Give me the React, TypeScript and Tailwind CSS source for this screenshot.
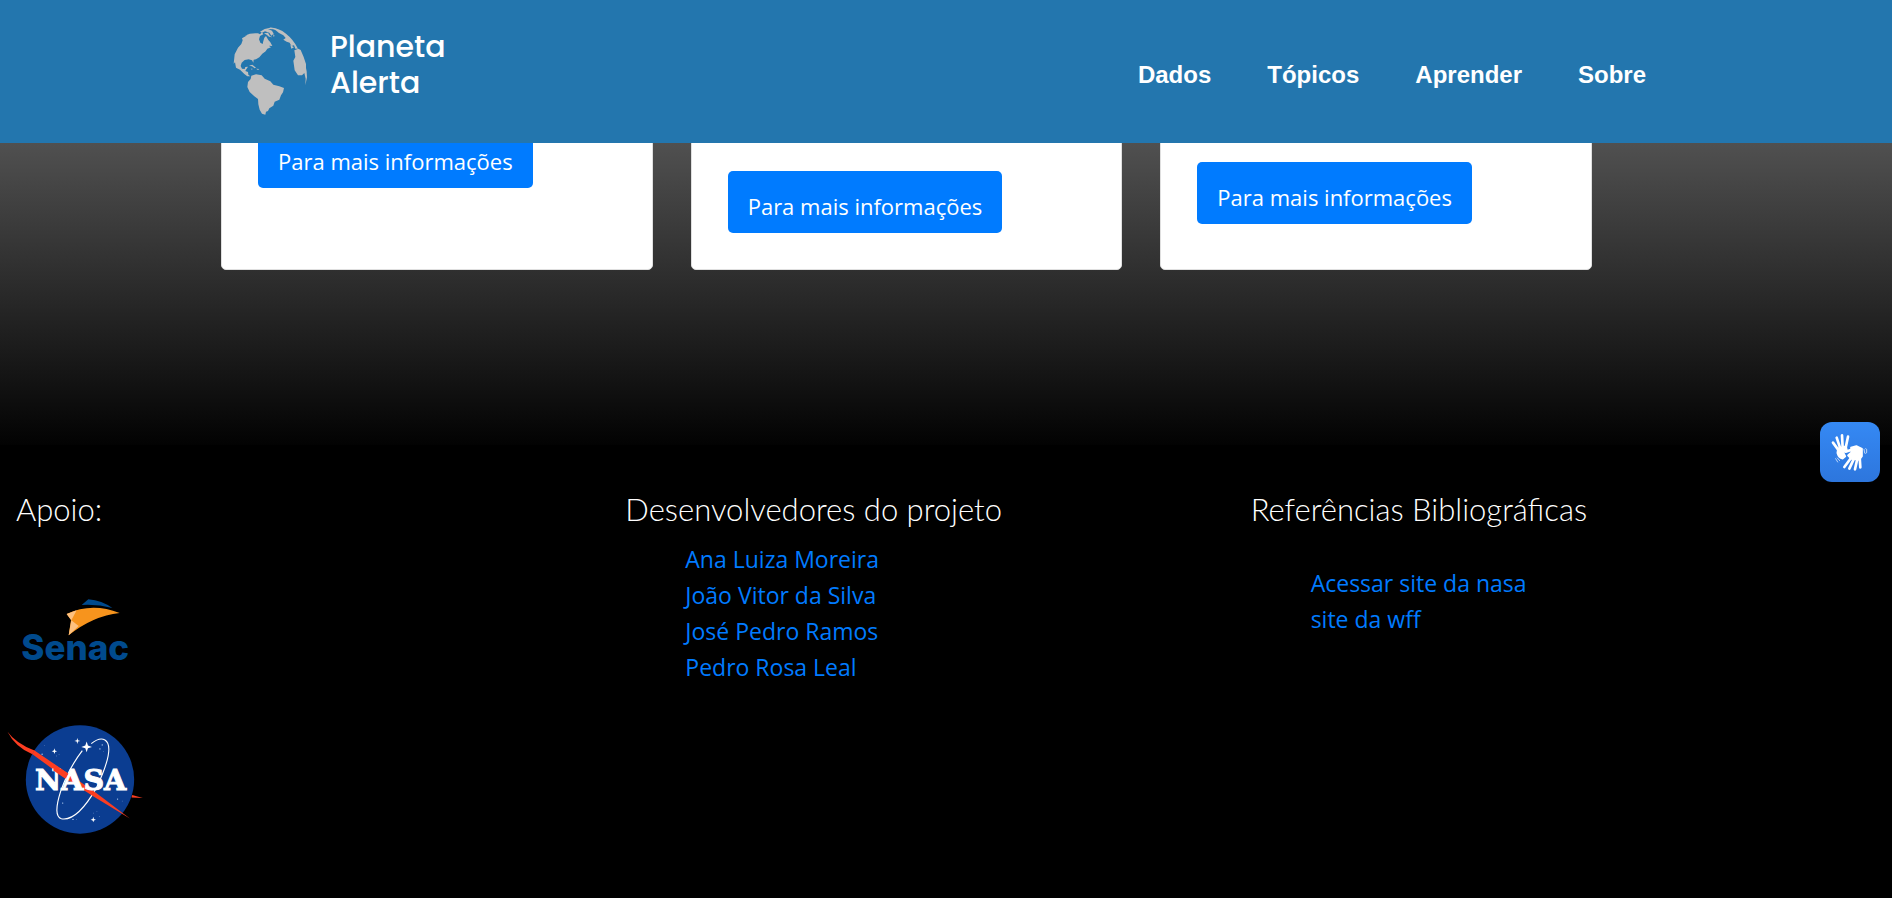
import React from "react";

const navItems = ["Dados", "Tópicos", "Aprender", "Sobre"];
const developers = ["Ana Luiza Moreira", "João Vitor da Silva", "José Pedro Ramos", "Pedro Rosa Leal"];
const references = ["Acessar site da nasa", "site da wff"];

function Globe() {
  return (
    <svg viewBox="60 75 240 279" className="h-[93px] w-20 shrink-0" fill="#bfbfbf" aria-hidden="true">
      <path d="M96 115L112 106L104 107Q122 98 144 100L150 103L156 97L160 103L150 108L147 118L151 128L158 132L160 123L163 113L168 108L175 120L181 127L187 138L176 137L183 142L172 146L167 154L157 161L148 172L138 178L131 179L130 188L126 181L116 178L104 180L95 188L92 198L96 206L104 207L106 201L114 200L108 209L106 213L114 216L115 224L121 229L112 229L103 222L90 209L78 203L75 187L71 191L74 163L84 143L94 132L98 121Z" />
      <path d="M117 197L127 194L138 203L134 205L126 199ZM138 206L148 207L144 210ZM122 206L128 206L126 209Z" />
      <path d="M124 227L138 223L155 226L164 236L181 244L190 254L208 259L222 264L219 277L213 286L208 299L194 305L190 317L178 325L174 333L168 335L166 344L156 341L149 329L145 313L144 297L133 289L119 276L112 261L114 246L122 237Z" />
      <path d="M150 95L164 87L181 83L202 87L190 88L174 87L186 92L191 101L184 107L178 98L165 94L156 98ZM162 100L174 98L180 108L187 112L177 110L170 104Z" />
      <path d="M178 82Q207 84 228 101Q250 118 264 146L256 146L252 136L244 138L239 128L230 125L220 119L227 114L220 106L207 99L197 91ZM190 102L194 108L190 110Z" />
      <path d="M241 135L252 142L244 146Z" />
      <path d="M253 151L265 146L272 150L281 171L288 192L288 204L290 214L291 232L286 256L287 236L283 219L276 226L264 226L254 211L250 182L256 171Z" />
    </svg>
  );
}

function Header() {
  return (
    <header className="fixed inset-x-0 top-0 z-20 flex h-[143px] items-start justify-between bg-[#2376ae] pr-[246px] pl-[230px] text-white">
      <a href="#" className="flex items-start gap-5 pt-[25px]">
        <Globe />
        <span className="w-36 pt-1 font-[Poppins,Inter,sans-serif] text-[30px] leading-9 font-medium">Planeta Alerta</span>
      </a>
      <nav className="flex gap-14 pt-[57px] font-['Liberation_Sans',Arial,sans-serif] text-2xl leading-9 font-bold">
        {navItems.map((item) => (
          <a key={item} href="#" className="leading-9">{item}</a>
        ))}
      </nav>
    </header>
  );
}

function Card({ className, children }: { className: string; children?: React.ReactNode }) {
  return (
    <article className={"flex h-[210px] flex-1 flex-col items-start justify-end rounded-[5px] border border-[#dfdfdf] bg-white px-9 " + className}>
      {children}
      <a href="#" className="flex h-[62px] items-end rounded-[5px] bg-[#007bff] px-5 pb-[9px] text-[22px] text-white">
        Para mais informações
      </a>
    </article>
  );
}

function SenacLogo() {
  return (
    <svg viewBox="60 50 336 204" className="ml-5 h-[68px] w-28" role="img" aria-label="Senac">
      <path d="M245 74L265 57Q306 61 337 83Q291 71 245 74Z" fill="#004a8d" />
      <path d="M200 101Q275 65 359 98Q278 107 206 165L213 119Z" fill="#f7941d" />
      <path d="M200 101L230 90L214 120ZM214 120L236 137L206 165Z" fill="#fdc180" />
      <text x="64" y="240" fill="#004a8d" fontSize="105" className="font-[Inter,sans-serif] font-extrabold">Senac</text>
    </svg>
  );
}

const stars = [[133, 107, 1], [126, 134, 2], [170, 139, 1], [177, 134, 1], [300, 118, 2], [307, 106, 2], [311, 125, 1], [353, 269, 2], [367, 275, 1], [188, 281, 2], [219, 330, 2], [229, 331, 1], [281, 311, 1], [291, 307, 1], [298, 321, 1]];

function NasaLogo() {
  return (
    <svg viewBox="15 40 420 340" className="ml-[5px] h-[113px] w-[140px]" role="img" aria-label="NASA">
      <circle cx="240" cy="210" r="163" fill="#0b3d91" />
      <path d="M247 123Q207 175 182 245Q158 320 184 328Q231 337 289 236Q348 111 315 91Q299 82 274 102" fill="none" stroke="#fff" strokeWidth="3.5" />
      {stars.map(([x, y, r]) => (
        <circle key={x + "-" + y} cx={x} cy={y} r={r} fill="#b9d3f5" />
      ))}
      <g fill="#fff">
        <path d="M260 96L264 108L276 112L264 116L260 128L256 116L244 112L256 108Z" />
        <path d="M232 85L234 92L241 94L234 96L232 103L230 96L223 94L230 92Z" />
        <path d="M163 116L165 123L171 125L165 127L163 133L161 127L155 125L161 123Z" />
        <path d="M280 322L282 329L288 331L282 333L280 339L278 333L272 331L278 329Z" />
      </g>
      <path d="M22 66Q45 99 103 123L97 134Q45 112 22 66Z" fill="#fc3d21" />
      <path d="M97 134L102 122L205 192L288 250L390 327L282 262L198 208Z" fill="#fc3d21" />
      <path d="M397 257L429 266L395 264Z" fill="#fc3d21" />
      <text x="242" y="243" textAnchor="middle" fill="#fff" stroke="#fff" strokeWidth="3" fontSize="86" className="font-['DejaVu_Serif',serif] font-bold">NASA</text>
      <path d="M160 163L205 193L195 207L160 183Z" fill="#fc3d21" />
    </svg>
  );
}

function HandsIcon() {
  return (
    <svg viewBox="90 65 120 120" className="size-10" fill="none" stroke="#fff" strokeLinecap="round" strokeLinejoin="round" aria-hidden="true">
      <path d="M99 97L116 120M110 82L121 115M126 75L128 112M144 79L137 112" strokeWidth="8" />
      <path d="M114 115L138 108L141 120L130 126L136 138L128 145Q116 142 112 128Z" fill="#fff" strokeWidth="5" />
      <path d="M133 170L153 143M148 175L162 145M165 177L172 145M181 171L179 140M137 124L155 118" strokeWidth="8" />
      <path d="M153 112L169 107L186 115L186 138L178 148L154 146L144 135L154 126Z" fill="#fff" strokeWidth="5" />
      <path d="M192 117L194 128M197 115L200 117L200 127L197 129M107 145L113 155M112 143L119 151" strokeWidth="2" />
    </svg>
  );
}

function Title({ children }: { children: React.ReactNode }) {
  return <h2 className="font-[Papyrus,Lato,sans-serif] text-[31px] leading-12 font-light text-white">{children}</h2>;
}

function LinkList({ items }: { items: string[] }) {
  return (
    <ul className="pl-[60px] text-[#007bff]">
      {items.map((item) => (
        <li key={item}><a href="#">{item}</a></li>
      ))}
    </ul>
  );
}

export default function App() {
  return (
    <div className="min-h-screen bg-black font-['Segoe_UI','Open_Sans',sans-serif] text-[23px] leading-9">
      <Header />
      <main className="bg-linear-to-b/srgb from-[#505050] from-[143px] to-black to-[455px] pt-[60px] pr-[300px] pb-[175px] pl-[221px]">
        <div className="flex gap-[38px]">
          <Card className="pb-[81px]" />
          <Card className="pb-9">
            <p className="mb-[30px] pl-[232px] text-[#212529]">p</p>
          </Card>
          <Card className="pb-[45px]" />
        </div>
      </main>
      <footer className="grid grid-cols-3 bg-black pt-10 pr-4">
        <section className="flex flex-col items-start">
          <div className="pl-4"><Title>Apoio:</Title></div>
          <a href="#" className="mt-16"><SenacLogo /></a>
          <a href="#" className="mt-[58px]"><NasaLogo /></a>
        </section>
        <section>
          <Title>Desenvolvedores do projeto</Title>
          <div className="pt-2"><LinkList items={developers} /></div>
        </section>
        <section>
          <Title>Referências Bibliográficas</Title>
          <div className="pt-8"><LinkList items={references} /></div>
        </section>
      </footer>
      <button type="button" aria-label="Libras" className="fixed top-[422px] right-3 z-30 flex size-[60px] items-center justify-center rounded-xl bg-linear-to-t from-[#2d76dd] to-[#3589f4]">
        <HandsIcon />
      </button>
    </div>
  );
}
